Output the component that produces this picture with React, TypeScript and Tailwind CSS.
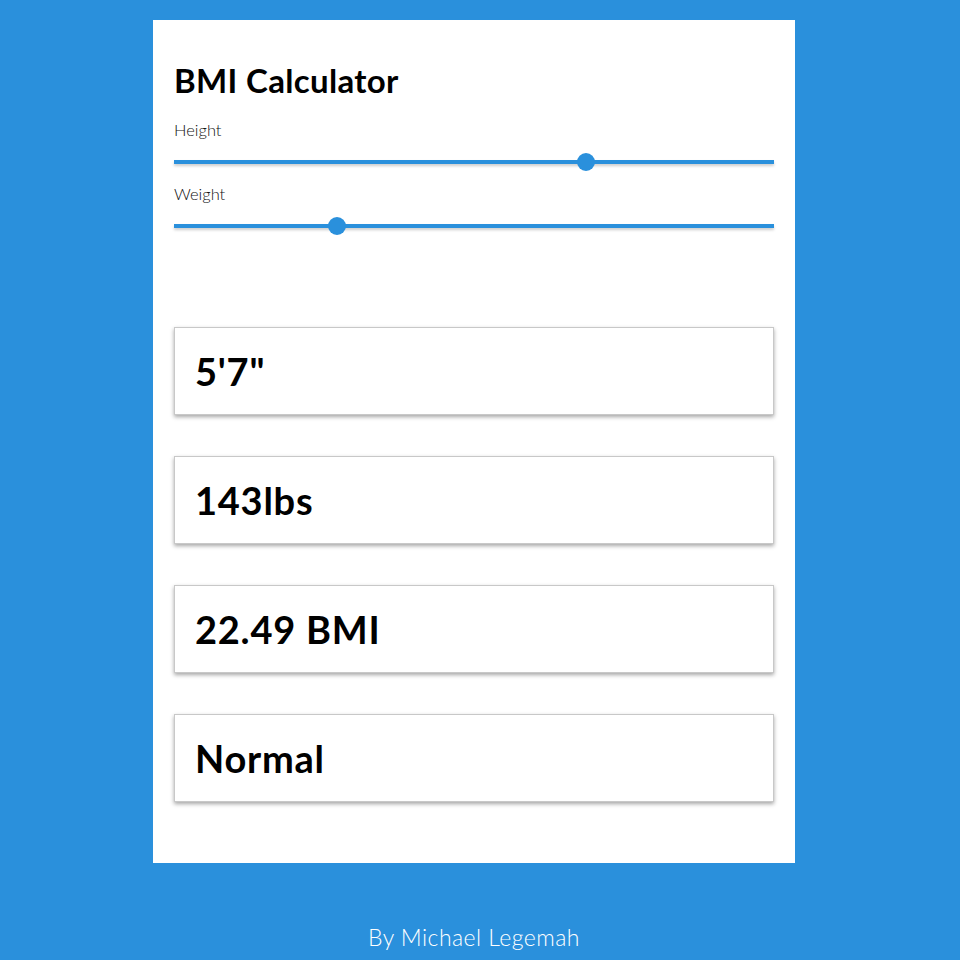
const results = ["5'7\"", "143lbs", "22.49 BMI", "Normal"];

function Slider({ label, percent }: { label: string; percent: number }) {
  return (
    <div>
      <p className="text-[16.5px] font-light leading-5 text-[#111]">{label}</p>
      <div className="relative mt-[20px] h-[4px] w-full bg-[#2a90dc] shadow-[0_2px_3px_rgba(0,0,0,0.2)]">
        <span
          className="absolute top-1/2 h-[18px] w-[18px] -translate-x-1/2 -translate-y-1/2 rounded-full bg-[#2a90dc]"
          style={{ left: `${percent}%` }}
        />
      </div>
    </div>
  );
}

export default function App() {
  return (
    <div className="min-h-[960px] bg-[#2a90dc] pb-[10px] pt-[20px] font-['Lato',sans-serif]">
      <div className="mx-auto flex w-[948px] flex-col items-center pr-[12px]">
        <div className="w-[642px] bg-white px-[21px] pb-[61px] pt-[40px]">
          <h1 className="text-[33px] font-bold leading-[40px] tracking-[0.01em] text-black">BMI Calculator</h1>
          <div className="mt-[20px] flex flex-col gap-[20px]">
            <Slider label="Height" percent={68.7} />
            <Slider label="Weight" percent={27.2} />
          </div>
          <div className="mt-[99px] flex flex-col gap-[41px]">
            {results.map((r) => (
              <div
                key={r}
                className="flex h-[88px] items-center border border-[#c8c8c8] px-[20px] shadow-[0_2px_4px_rgba(0,0,0,0.35)]"
              >
                <span className="text-[38px] font-bold tracking-[0.02em] text-black">{r}</span>
              </div>
            ))}
          </div>
        </div>
        <p className="mt-[57px] text-[23px] font-light tracking-[0.02em] text-white">By Michael Legemah</p>
      </div>
    </div>
  );
}
